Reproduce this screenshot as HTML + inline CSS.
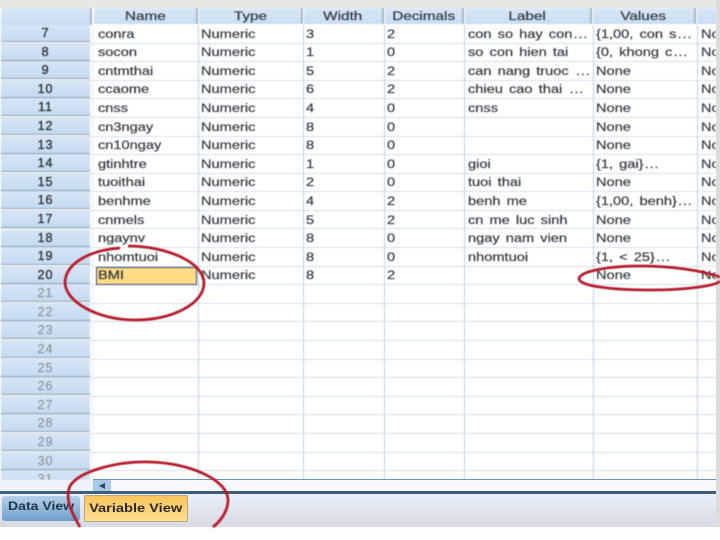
<!DOCTYPE html>
<html><head><meta charset="utf-8"><style>
html,body{margin:0;padding:0}
body{width:720px;height:540px;overflow:hidden;background:#fdfdfd;position:relative;font-family:"Liberation Sans",sans-serif;color:#33383f}
#top{position:absolute;left:0;top:0;width:720px;height:8px;background:#e9e7e4}
#sheet{position:absolute;left:0;top:8px;width:716px;height:472px;background:#fff;overflow:hidden;filter:blur(.45px)}
#rightbar{position:absolute;left:716px;top:0;width:4px;height:527px;background:#dcdcdc}
.hd{position:absolute;top:0;height:16px;background:linear-gradient(#d9e7f7,#c9ddf3);border-right:2px solid #a9b6c4;text-align:center;font-size:11.5px;line-height:18px;-webkit-text-stroke:.2px #33383f}
.hd span{display:inline-block;transform:scaleX(1.33)}
.r{position:absolute;left:0;width:716px;height:18.6px;border-bottom:1px solid #d6dfe8;box-sizing:border-box;font-size:11.5px;line-height:18px}
.r b{position:absolute;left:1px;top:0;width:89px;height:17px;background:linear-gradient(#d6e5f6,#c6daf0);border-bottom:1.5px solid #8fa3b8;text-align:center;font-weight:normal;font-size:12.5px;letter-spacing:.9px;color:#2e3338;line-height:17px;box-sizing:border-box;-webkit-text-stroke:.35px #2e3338}
.r b.g{color:#83888e;-webkit-text-stroke:0}
.r span{position:absolute;top:.7px;white-space:nowrap;transform:scaleX(1.27);transform-origin:0 50%;-webkit-text-stroke:.2px #33383f}
.r em{font-style:normal;letter-spacing:.6px;margin-left:1px}
.a{left:98px}.t{left:201px}.w{left:306px}.d{left:387px}.l{left:468px;word-spacing:1.6px}.v{left:596px;word-spacing:1.6px}.m{left:701px}
.cl{position:absolute;top:17px;bottom:0;width:1px;background:#bcd3e6}
#rowfoot{position:absolute;left:0;top:480px;width:93px;height:11px;background:#eef3f9}
#scroll{position:absolute;left:93px;top:479px;width:623px;height:12px;background:#f6f8fb;border-top:1px solid #6f93b5;box-sizing:border-box}
#sb{position:absolute;left:0;top:0;width:18px;height:11px;background:#a9c8e8;color:#345;font-size:8px;line-height:11px;text-align:center}
#dark{position:absolute;left:0;top:491px;width:716px;height:3px;background:#3f5d7c}
#bar{position:absolute;left:0;top:494px;width:716px;height:33px;background:linear-gradient(#e9f0fb,#d8d9e3)}
.tab{position:absolute;box-sizing:border-box;text-align:center;font-size:11.5px;font-weight:bold;filter:blur(.3px)}
#t1 span{display:inline-block;transform:scaleX(1.22)}
#t2 span{display:inline-block;transform:scaleX(1.27)}
#t1{left:2px;top:496px;width:78px;height:25px;background:linear-gradient(#b5d0e8,#6f9fc8);border-radius:3px;color:#1d3550;line-height:23px}
#t2{left:84px;top:495px;width:104px;height:27px;background:linear-gradient(#fbc55c,#fcdc92);border:1px solid #b9a878;border-radius:2px;color:#2c2a20;line-height:27px}
svg{position:absolute;left:0;top:0;filter:blur(.4px)}
</style></head><body>
<div id="top"></div>
<div id="sheet">
<div class="hd" style="left:1px;width:89px;height:17px"></div>
<div class="hd" style="left:94px;width:102px"><span>Name</span></div>
<div class="hd" style="left:199px;width:102px"><span>Type</span></div>
<div class="hd" style="left:304px;width:78px"><span>Width</span></div>
<div class="hd" style="left:385px;width:77px"><span>Decimals</span></div>
<div class="hd" style="left:465px;width:125px"><span>Label</span></div>
<div class="hd" style="left:593px;width:101px"><span>Values</span></div>
<div class="hd" style="left:697px;width:19px;border-right:0"></div>

<div class="r" style="top:17px"><b>7</b><span class="a">conra</span><span class="t">Numeric</span><span class="w">3</span><span class="d">2</span><span class="l">con so hay con<em>...</em></span><span class="v">{1,00, con s<em>...</em></span><span class="m">No</span></div>
<div class="r" style="top:35.6px"><b>8</b><span class="a">socon</span><span class="t">Numeric</span><span class="w">1</span><span class="d">0</span><span class="l">so con hien tai</span><span class="v">{0, khong c<em>...</em></span><span class="m">No</span></div>
<div class="r" style="top:54.2px"><b>9</b><span class="a">cntmthai</span><span class="t">Numeric</span><span class="w">5</span><span class="d">2</span><span class="l">can nang truoc <em>...</em></span><span class="v">None</span><span class="m">No</span></div>
<div class="r" style="top:72.8px"><b>10</b><span class="a">ccaome</span><span class="t">Numeric</span><span class="w">6</span><span class="d">2</span><span class="l">chieu cao thai <em>...</em></span><span class="v">None</span><span class="m">No</span></div>
<div class="r" style="top:91.4px"><b>11</b><span class="a">cnss</span><span class="t">Numeric</span><span class="w">4</span><span class="d">0</span><span class="l">cnss</span><span class="v">None</span><span class="m">No</span></div>
<div class="r" style="top:110px"><b>12</b><span class="a">cn3ngay</span><span class="t">Numeric</span><span class="w">8</span><span class="d">0</span><span class="v">None</span><span class="m">No</span></div>
<div class="r" style="top:128.5px"><b>13</b><span class="a">cn10ngay</span><span class="t">Numeric</span><span class="w">8</span><span class="d">0</span><span class="v">None</span><span class="m">No</span></div>
<div class="r" style="top:147.1px"><b>14</b><span class="a">gtinhtre</span><span class="t">Numeric</span><span class="w">1</span><span class="d">0</span><span class="l">gioi</span><span class="v">{1, gai}<em>...</em></span><span class="m">No</span></div>
<div class="r" style="top:165.7px"><b>15</b><span class="a">tuoithai</span><span class="t">Numeric</span><span class="w">2</span><span class="d">0</span><span class="l">tuoi thai</span><span class="v">None</span><span class="m">No</span></div>
<div class="r" style="top:184.3px"><b>16</b><span class="a">benhme</span><span class="t">Numeric</span><span class="w">4</span><span class="d">2</span><span class="l">benh me</span><span class="v">{1,00, benh}<em>...</em></span><span class="m">No</span></div>
<div class="r" style="top:202.9px"><b>17</b><span class="a">cnmels</span><span class="t">Numeric</span><span class="w">5</span><span class="d">2</span><span class="l">cn me luc sinh</span><span class="v">None</span><span class="m">No</span></div>
<div class="r" style="top:221.5px"><b>18</b><span class="a">ngaynv</span><span class="t">Numeric</span><span class="w">8</span><span class="d">0</span><span class="l">ngay nam vien</span><span class="v">None</span><span class="m">No</span></div>
<div class="r" style="top:240.1px"><b>19</b><span class="a">nhomtuoi</span><span class="t">Numeric</span><span class="w">8</span><span class="d">0</span><span class="l">nhomtuoi</span><span class="v">{1, &lt; 25}<em>...</em></span><span class="m">No</span></div>
<div class="r" style="top:258.7px"><b>20</b><div style="position:absolute;left:96px;top:0;width:101px;height:18px;background:#fddc85;border:1.5px solid #3b4a7a;box-sizing:border-box"></div><span class="a">BMI</span><span class="t">Numeric</span><span class="w">8</span><span class="d">2</span><span class="v">None</span><span class="m">No</span></div>
<div class="r" style="top:277.3px"><b class="g">21</b></div>
<div class="r" style="top:295.9px"><b class="g">22</b></div>
<div class="r" style="top:314.4px"><b class="g">23</b></div>
<div class="r" style="top:333px"><b class="g">24</b></div>
<div class="r" style="top:351.6px"><b class="g">25</b></div>
<div class="r" style="top:370.2px"><b class="g">26</b></div>
<div class="r" style="top:388.8px"><b class="g">27</b></div>
<div class="r" style="top:407.4px"><b class="g">28</b></div>
<div class="r" style="top:426px"><b class="g">29</b></div>
<div class="r" style="top:444.6px"><b class="g">30</b></div>
<div class="r" style="top:463.2px"><b class="g">31</b></div>

<div class="cl" style="left:92px;background:#e4edf5"></div>
<div class="cl" style="left:198px"></div>
<div class="cl" style="left:303px"></div>
<div class="cl" style="left:384px"></div>
<div class="cl" style="left:464px"></div>
<div class="cl" style="left:593px"></div>
<div class="cl" style="left:697px"></div>
</div>
<div id="rightbar"></div>
<div id="rowfoot"></div>
<div id="scroll"><div id="sb">◀</div></div>
<div id="dark"></div>
<div id="bar"></div>
<div class="tab" id="t1"><span>Data View</span></div>
<div class="tab" id="t2"><span>Variable View</span></div>
<svg width="720" height="540" viewBox="0 0 720 540" fill="none" stroke="#b61c2c" stroke-width="2.8">
<path d="M120 248C92 250 66 262 65 282C65 302 98 320 135 320C172 320 204 304 204 283C204 262 166 246 128 246"/>
<path d="M80 527C70 510 65 498 70 486C80 470 120 461 150 462C190 463 228 480 228 500C228 510 222 520 213 527"/>
<path d="M640 266C610 266 579 271 579 279C580 286 612 290 650 290C685 290 716 286 720 281M720 277C700 270 670 266 640 266"/>
</svg>
</body></html>
